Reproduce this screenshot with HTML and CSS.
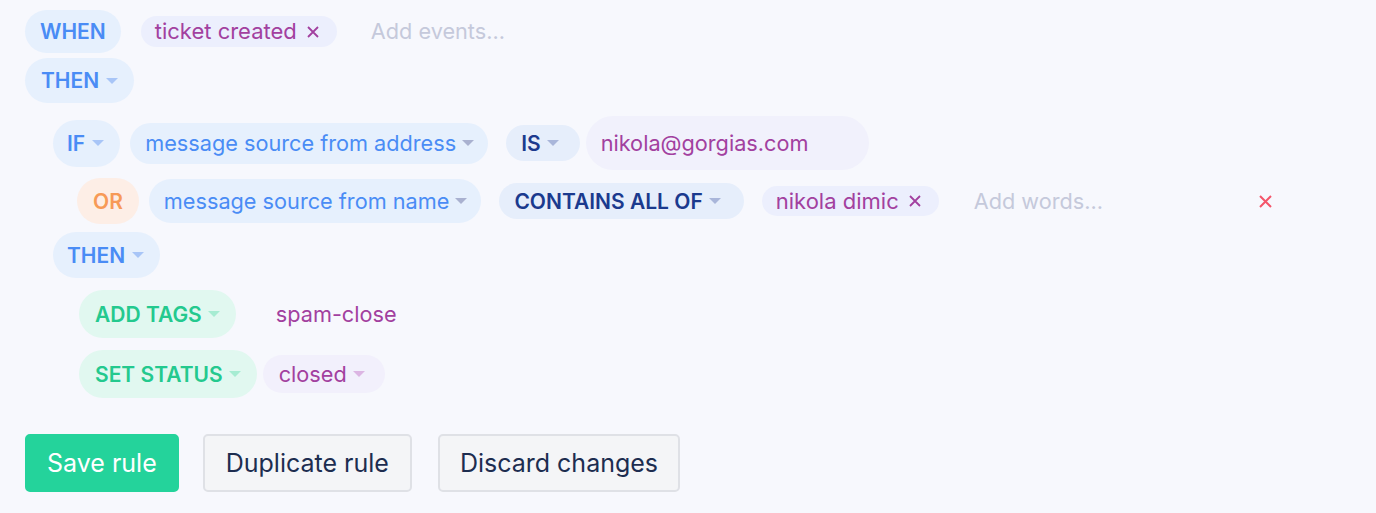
FILE: index.html
```html
<!DOCTYPE html>
<html lang="en">
<head>
  <meta charset="UTF-8" />
  <title>Rule editor</title>
  <link rel="stylesheet" href="styles.css">
</head>
<body>
  <main class="rule">
    <div class="row row-when">
      <span class="pill kw">WHEN</span>
      <span class="chip">ticket created
        <svg class="remove" width="12" height="12" viewBox="0 0 12 12"><path d="M1 1L11 11M11 1L1 11"/></svg>
      </span>
      <span class="placeholder events">Add events...</span>
    </div>
    <div class="row row-then">
      <span class="pill kw">THEN <i class="caret"></i></span>
    </div>

    <div class="block">
      <div class="row row-if">
        <span class="pill kw kw-if">IF <i class="caret"></i></span>
        <span class="pill field">message source from address <i class="caret"></i></span>
        <span class="pill op">IS <i class="caret"></i></span>
        <span class="pill value">nikola@gorgias.com</span>
      </div>
      <div class="row row-or">
        <span class="pill or">OR</span>
        <span class="pill field">message source from name <i class="caret"></i></span>
        <span class="pill op">CONTAINS ALL OF <i class="caret"></i></span>
        <span class="chip">nikola dimic
          <svg class="remove" width="12" height="12" viewBox="0 0 12 12"><path d="M1 1L11 11M11 1L1 11"/></svg>
        </span>
        <span class="placeholder words">Add words...</span>
        <svg class="delete" width="13" height="13" viewBox="0 0 13 13"><path d="M1 1L12 12M12 1L1 12"/></svg>
      </div>
      <div class="row row-then2">
        <span class="pill kw">THEN <i class="caret"></i></span>
      </div>

      <div class="actions">
        <div class="row row-tags">
          <span class="pill action">ADD TAGS <i class="caret"></i></span>
          <span class="tag">spam-close</span>
        </div>
        <div class="row row-status">
          <span class="pill action">SET STATUS <i class="caret"></i></span>
          <span class="pill status">closed <i class="caret"></i></span>
        </div>
      </div>
    </div>

    <div class="buttons">
      <button class="btn btn-save">Save rule</button>
      <button class="btn btn-dup">Duplicate rule</button>
      <button class="btn btn-discard">Discard changes</button>
    </div>
  </main>
</body>
</html>
```

FILE: styles.css
```css
body {
  margin: 0;
  background-color: #f7f8fd;
  font-family: Inter, 'Noto Sans', sans-serif;
  font-size: 21.7px;
  line-height: 25px;
  color: #1d2d50;
}
.rule {
  padding: 10px 25px;
}
.row {
  display: flex;
  align-items: center;
}
.pill {
  display: inline-flex;
  align-items: center;
  padding: 9px 16px;
  border-radius: 24px;
  white-space: nowrap;
}
.caret {
  display: inline-block;
  width: 0;
  height: 0;
  margin-left: 7px;
  border-left: 6px solid transparent;
  border-right: 6px solid transparent;
  border-top: 6px solid #a8c5f7;
}

/* keywords */
.kw {
  background: #e6f0fd;
  color: #4a8cf5;
  font-size: 21px;
  font-weight: 600;
}
.row-when .kw {
  padding: 9px 15px;
  margin-right: 20px;
}
.row-then {
  margin-top: 5px;
}
.row-then .kw {
  padding-top: 10px;
  padding-bottom: 10px;
}
.block {
  padding-left: 28px;
}
.row-if {
  margin-top: 13px;
  height: 54px;
}
.kw-if {
  padding: 11px 16px 11px 14px;
  margin-right: 10px;
}
.field {
  background: #e6f0fd;
  color: #4a8cf5;
  padding: 8px 14px 8px 15px;
  margin-right: 18px;
}
.field .caret {
  margin-left: 6px;
  border-top-color: #a9b1d0;
}
.op {
  background: #e6eefb;
  color: #1b3a8e;
  font-size: 21px;
  font-weight: 600;
  padding: 5.5px 21px 5.5px 15px;
  margin-right: 6px;
}
.op .caret {
  margin-left: 6px;
  border-top-color: #a9b6da;
}
.value {
  background: #f1f1fc;
  color: #a2409f;
  padding: 14.5px 15px;
  width: 253px;
  border-radius: 28px;
}

.row-or {
  margin-top: 8px;
  padding-left: 24px;
}
.or {
  background: #fdeee6;
  color: #f79a57;
  font-size: 21px;
  font-weight: 600;
  padding: 10.5px 16px;
  margin-right: 10px;
}
.row-or .field {
  padding-top: 9.5px;
  padding-bottom: 9.5px;
}
.row-or .op {
  padding-right: 23px;
  margin-right: 18px;
}

.chip {
  display: inline-flex;
  align-items: center;
  background: #eceffd;
  color: #a2409f;
  font-size: 22px;
  padding: 2.5px 18px 2.5px 14px;
  border-radius: 16px;
  white-space: nowrap;
}
.remove {
  margin-left: 10px;
  stroke: #a2409f;
  stroke-width: 1.8;
}
.row-when .chip {
  padding-top: 3px;
  padding-bottom: 3px;
}
.placeholder {
  color: #c5c9db;
}
.events {
  margin-left: 34px;
}
.words {
  margin-left: 35px;
  width: 285px;
}
.delete {
  stroke: #f4556a;
  stroke-width: 2;
}

.row-then2 {
  margin-top: 8px;
}
.row-then2 .kw {
  padding: 10.5px 16px 10.5px 14px;
}

.actions {
  padding-left: 26px;
}
.action {
  background: #e1f8f0;
  color: #24c98e;
  font-size: 21px;
  font-weight: 600;
  padding: 11.5px 16px;
}
.action .caret {
  margin-left: 6px;
  border-top-color: #a6ecd2;
}
.row-tags {
  margin-top: 12px;
}
.tag {
  margin-left: 40px;
  color: #a2409f;
}
.row-status {
  margin-top: 12px;
}
.row-status .action {
  margin-right: 6px;
}
.status {
  background: #f2f0fc;
  color: #a2409f;
  padding: 6.5px 20px 6.5px 16px;
  border-radius: 20px;
}
.status .caret {
  margin-left: 6px;
  border-top-color: #dcb5e3;
}

.buttons {
  display: flex;
  gap: 24px;
  margin-top: 36px;
}
.btn {
  font-family: Inter, 'Noto Sans', sans-serif;
  font-size: 25px;
  height: 58px;
  padding: 0 20px;
  border: 2px solid #dfe1e6;
  border-radius: 5px;
  background: #f4f5f7;
  color: #1d2d50;
}
.btn-save {
  background: #24d39b;
  border-color: #24d39b;
  color: #fff;
}
.btn-dup {
  padding: 0 21px;
}
.btn-discard {
  margin-left: 2px;
}
```
